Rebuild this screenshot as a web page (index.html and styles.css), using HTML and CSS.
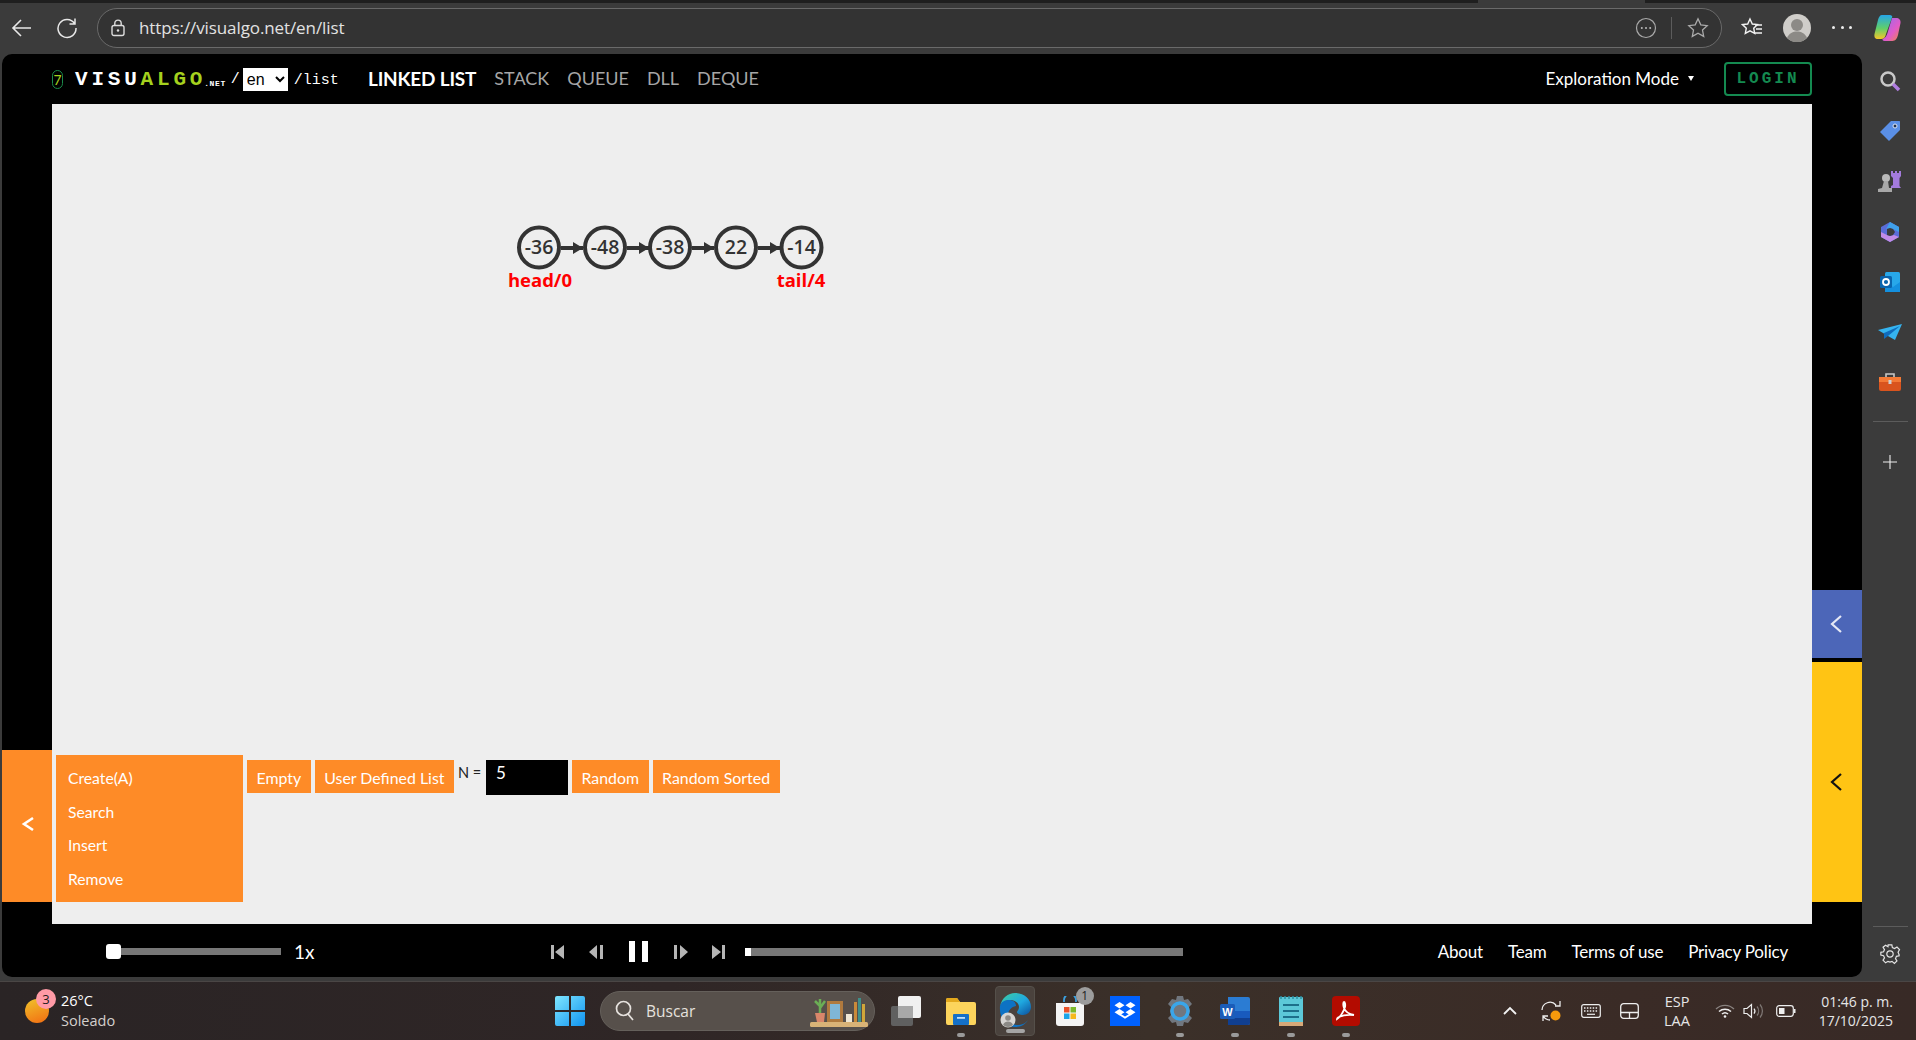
FILE: index.html
```html
<!DOCTYPE html>
<html lang="es">
<head>
    <meta charset="UTF-8">
    <title>VisuAlgo - Linked List</title>
    <link rel="stylesheet" href="styles.css">
</head>
<body>
    <div class="tabstrip"><div class="tab-active"></div></div>
    <div class="toolbar">
        <svg class="tool-icon back" width="22" height="22" viewBox="0 0 22 22"><path d="M20 11H2M10 3l-8 8 8 8" fill="none" stroke="#e8e8e8" stroke-width="1.6"/></svg>
        <svg class="tool-icon reload" width="22" height="22" viewBox="0 0 22 22"><path d="M18.5 6.5A9 9 0 1 0 20 11M19 1.5v5.5h-5.5" fill="none" stroke="#e8e8e8" stroke-width="1.5"/></svg>
        <div class="urlbar">
            <svg width="14" height="18" viewBox="0 0 14 18"><rect x="1" y="6.5" width="12" height="10" rx="2" fill="none" stroke="#ddd" stroke-width="1.4"/><path d="M3.8 6.5V4.3a3.2 3.2 0 0 1 6.4 0v2.2" fill="none" stroke="#ddd" stroke-width="1.4"/><circle cx="7" cy="11.5" r="1.2" fill="#ddd"/></svg>
            <span class="url">https://visualgo.net/en/list</span>
            <svg class="url-more" width="22" height="22" viewBox="0 0 22 22"><circle cx="11" cy="11" r="9.5" fill="none" stroke="#aaa" stroke-width="1.2"/><circle cx="6.8" cy="11" r="1" fill="#bbb"/><circle cx="11" cy="11" r="1" fill="#bbb"/><circle cx="15.2" cy="11" r="1" fill="#bbb"/></svg>
            <div class="url-sep"></div>
            <svg width="22" height="22" viewBox="0 0 22 22"><path d="M11 1.8l2.8 6 6.4.8-4.7 4.4 1.2 6.4-5.7-3.2-5.7 3.2 1.2-6.4L1.8 8.600l6.4-.8z" fill="none" stroke="#aaa" stroke-width="1.3"/></svg>
        </div>
        <svg class="fav" width="22" height="22" viewBox="0 0 22 22"><path d="M9 2l2.300 5 5.200.6-3.800 3.600 1 5.200L9 13.800l-4.700 2.600 1-5.200L1.500 7.600 6.700 7z" fill="none" stroke="#f2f2f2" stroke-width="1.400"/><path d="M14 8h7M15 12h6M14 16h7" stroke="#f2f2f2" stroke-width="1.300"/></svg>
        <svg class="profile" width="28" height="28" viewBox="0 0 28 28"><circle cx="14" cy="14" r="14" fill="#cfcdc9"/><circle cx="14" cy="11" r="6" fill="#8c8a86"/><path d="M4 24c2-5 6-6.500 10-6.500S22 19 24 24a14 14 0 0 1-20 0z" fill="#8c8a86"/></svg>
        <div class="more"><i></i><i></i><i></i></div>
        <svg class="copilot" width="28" height="28" viewBox="0 0 28 28">
            <defs>
                <linearGradient id="cp1" x1="0" y1="0" x2="0" y2="1"><stop offset="0" stop-color="#26a6e8"/><stop offset=".55" stop-color="#5fcf6a"/><stop offset="1" stop-color="#f5c52a"/></linearGradient>
                <linearGradient id="cp2" x1="0" y1="0" x2="1" y2="1"><stop offset="0" stop-color="#8f6df0"/><stop offset=".6" stop-color="#e25bc8"/><stop offset="1" stop-color="#f08a3c"/></linearGradient>
            </defs>
            <path d="M9 1h8c1 0 2 .8 2.300 1.800L13 20c-.5 3-2 5-5 5H5c-3 0-4-2-3.500-5L5 6c.7-3 2-5 4-5z" fill="url(#cp1)"/>
            <path d="M19 4h4c3 0 5 2 4.500 5L25 21c-.7 3-2.500 6-5.500 6h-8c-1.500 0-2-1-2-2 3-1 4-3 5-6z" fill="url(#cp2)"/>
        </svg>
    </div>

    <div class="window">
        <div class="page">
            <header class="topbar">
                <div class="logo-wrap">
                    <span class="pill">7</span>
                    <span class="logo">VISU<b>ALGO</b></span><span class="logo-net">.NET</span><span class="slash">/</span>
                    <select class="lang"><option>en</option></select>
                    <span class="path">/list</span>
                </div>
                <nav class="modes">
                    <a class="active">LINKED LIST</a>
                    <a>STACK</a>
                    <a>QUEUE</a>
                    <a>DLL</a>
                    <a>DEQUE</a>
                </nav>
                <div class="mode-pick">Exploration Mode<span class="caret"></span></div>
                <div class="login">LOGIN</div>
            </header>

            <div class="stage">
                <div class="col-left">
                    <div class="tab-orange"><svg width="14" height="16" viewBox="0 0 14 16"><path d="M12 2L3 8l9 6" fill="none" stroke="#fff" stroke-width="2.600"/></svg></div>
                </div>
                <main class="canvas">
                    <svg class="viz" width="1760" height="646" viewBox="0 0 1760 646">
                        <g class="edges">
                            <path d="M509 144h22M575 144h22M640 144h22M706 144h22"/>
                        </g>
                        <g class="arrows">
                            <path d="M521 138l10 6-10 6zM587 138l10 6-10 6zM652 138l10 6-10 6zM718 138l10 6-10 6z"/>
                        </g>
                        <g class="nodes">
                            <circle cx="487" cy="143.500" r="20"/><circle cx="553" cy="143.500" r="20"/><circle cx="618" cy="143.500" r="20"/><circle cx="684" cy="143.500" r="20"/><circle cx="749.500" cy="143.500" r="20"/>
                        </g>
                        <g class="node-text">
                            <text x="487" y="150">-36</text><text x="553" y="150">-48</text><text x="618" y="150">-38</text><text x="684" y="150">22</text><text x="749.500" y="150">-14</text>
                        </g>
                        <g class="node-label">
                            <text x="488" y="183">head/0</text><text x="749" y="183">tail/4</text>
                        </g>
                    </svg>
                    <div class="actions">
                        <ul class="action-list">
                            <li>Create(A)</li>
                            <li>Search</li>
                            <li>Insert</li>
                            <li>Remove</li>
                        </ul>
                        <div class="action-row">
                            <button class="act-btn">Empty</button>
                            <button class="act-btn">User Defined List</button>
                            <span class="n-label">N =</span>
                            <div class="n-input">5</div>
                            <button class="act-btn">Random</button>
                            <button class="act-btn">Random Sorted</button>
                        </div>
                    </div>
                </main>
                <div class="col-right">
                    <div class="tab-blue"><svg width="14" height="20" viewBox="0 0 14 20"><path d="M12 2L3 10l9 8" fill="none" stroke="#e6e9f5" stroke-width="2.200"/></svg></div>
                    <div class="tab-yellow"><svg width="14" height="20" viewBox="0 0 14 20"><path d="M12 2L3 10l9 8" fill="none" stroke="#111" stroke-width="2.200"/></svg></div>
                </div>
            </div>

            <footer class="player">
                <div class="speed"><div class="thumb"></div></div>
                <span class="speed-val">1x</span>
                <div class="media">
                    <svg width="13" height="16" viewBox="0 0 13 16"><path d="M0 1h3v14H0zM13 1v14L4 8z" fill="#b5b5b5"/></svg>
                    <svg class="m-b" width="16" height="16" viewBox="0 0 16 16"><path d="M9 1v14L1 8zM12 1h3v14h-3z" fill="#b5b5b5"/></svg>
                    <svg class="m-p" width="20" height="21" viewBox="0 0 20 21"><path d="M0 0h6v21H0zM13 0h6v21h-6z" fill="#fff"/></svg>
                    <svg class="m-f" width="16" height="16" viewBox="0 0 16 16"><path d="M1 1h3v14H1zM7 1l8 7-8 7z" fill="#b5b5b5"/></svg>
                    <svg class="m-l" width="14" height="16" viewBox="0 0 14 16"><path d="M0 1l9 7-9 7zM10 1h3v14h-3z" fill="#b5b5b5"/></svg>
                </div>
                <div class="progress"><div class="progress-done"></div></div>
                <div class="links">
                    <a>About</a><a>Team</a><a>Terms of use</a><a>Privacy Policy</a>
                </div>
            </footer>
        </div>

        <aside class="sidebar">
            <svg class="s1" width="22" height="22" viewBox="0 0 22 22"><circle cx="9" cy="9" r="6.500" fill="none" stroke="#c9c9c9" stroke-width="2.500"/><path d="M14 14l6 6" stroke="#b07de0" stroke-width="3.500"/></svg>
            <svg class="s2" width="22" height="22" viewBox="0 0 22 22"><path d="M12 1h8c.6 0 1 .4 1 1v8L10 21 1 12z" fill="#5a8fe6"/><circle cx="16" cy="6" r="2" fill="#23324f" stroke="#dfe8fa" stroke-width="1"/></svg>
            <svg class="s3" width="24" height="24" viewBox="0 0 24 24"><path d="M13 2h2v2h2V2h2v2h2V2h2v5l-1.500 2v8l1.500 2H13V17l2-1V9l-2-2z" fill="#a47bdc"/><circle cx="8" cy="9" r="4" fill="#b9b9b9"/><path d="M6 12h4l1 7h3v4H0v-3l4-1z" fill="#a8a8a8"/></svg>
            <svg class="s4" width="22" height="22" viewBox="0 0 22 22"><path d="M11 1l9 5v10l-9 5-9-5V6z" fill="#5a6cd8"/><path d="M11 1l9 5v5l-6-3-3-1-4 1z" fill="#3fa0ea"/><path d="M2 11l6 3 3 1 4-1 5 2-9 5-9-5z" fill="#c18be8"/><path d="M8 8l3-1 3 1 2 3-2 3-3 1-3-1z" fill="#3b3b3b"/></svg>
            <svg class="s5" width="22" height="22" viewBox="0 0 22 22"><rect x="6" y="1" width="15" height="20" rx="1.500" fill="#28a8ea"/><path d="M6 11l8 5 7-5v10H6z" fill="#1490df"/><rect x="1" y="5" width="12" height="12" rx="1.500" fill="#0a64ad"/><circle cx="7" cy="11" r="3" fill="none" stroke="#fff" stroke-width="1.800"/></svg>
            <svg class="s6" width="24" height="18" viewBox="0 0 24 18"><path d="M0 7L24 1 17 17l-7-4z" fill="#35b4f0"/><path d="M6 10v6l4-3 12-10z" fill="#0f6cbd"/></svg>
            <svg class="s7" width="24" height="20" viewBox="0 0 24 20"><path d="M8 5V2h8v3" fill="none" stroke="#c8c8c8" stroke-width="1.600"/><path d="M1 5h22v5H1z" fill="#f47a36"/><path d="M1 10h22v7a2 2 0 0 1-2 2H3a2 2 0 0 1-2-2z" fill="#d9541e"/><rect x="10.500" y="8" width="3" height="4" fill="#d0d0d0"/></svg>
            <div class="side-sep"></div>
            <svg class="s8" width="16" height="16" viewBox="0 0 16 16"><path d="M8 1v14M1 8h14" stroke="#eee" stroke-width="1.100"/></svg>
            <div class="side-sep bottom"></div>
            <svg class="s9" width="22" height="22" viewBox="0 0 24 24"><path d="M12 8.500a3.500 3.500 0 1 0 0 7 3.500 3.500 0 0 0 0-7zM10 2h4l.6 3 2.400 1 2.600-1.600 2.800 2.800L20.800 10l1 2.400-.1 0 .3 1.600-3 .6-1 2.400 1.600 2.600-2.800 2.800L14.200 20l-2.200.9-2.200-.9-2.600 1.600-2.800-2.800L6 16.200 5 13.800 2 13.200v-3l3-.6 1-2.400-1.600-2.600 2.800-2.200L9.800 4z" fill="none" stroke="#e4e4e4" stroke-width="1.300"/></svg>
        </aside>
    </div>

    <div class="taskbar">
        <div class="weather">
            <div class="sun"></div>
            <span class="badge">3</span>
            <div class="weather-text"><span>26°C</span><span class="dim">Soleado</span></div>
        </div>
        <div class="dock">
            <svg width="30" height="30" viewBox="0 0 30 30">
                <defs><linearGradient id="wn" x1="0" y1="0" x2="1" y2="1"><stop offset="0" stop-color="#7fe6ff"/><stop offset="1" stop-color="#0f93f0"/></linearGradient></defs>
                <path d="M0 2a2 2 0 0 1 2-2h12v14H0zM16 0h12a2 2 0 0 1 2 2v12H16zM0 16h14v14H2a2 2 0 0 1-2-2zM16 16h14v12a2 2 0 0 1-2 2H16z" fill="url(#wn)"/>
            </svg>
            <div class="searchbox">
                <svg width="20" height="22" viewBox="0 0 20 22"><circle cx="8.500" cy="8.500" r="7" fill="none" stroke="#e6e2de" stroke-width="1.700"/><path d="M13 14l5 6" stroke="#e6e2de" stroke-width="1.700"/></svg>
                <span>Buscar</span>
                <svg class="shelf" width="58" height="34" viewBox="0 0 58 34"><rect x="0" y="28" width="58" height="5" rx="1.500" fill="#d9b377"/><path d="M5 19h10l-1 9H7z" fill="#d9866a"/><path d="M10 19V5M10 12L5 7M10 14l5-7" stroke="#6bae55" stroke-width="2.500"/><rect x="17" y="7" width="16" height="21" fill="#b07a3e"/><rect x="20" y="10" width="10" height="15" fill="#7fb6d6"/><rect x="36" y="20" width="6" height="8" fill="#efe7d4"/><rect x="44" y="8" width="3" height="20" fill="#c98a3a"/><rect x="48" y="4" width="3" height="24" fill="#3f8f8a"/><rect x="52" y="10" width="3" height="18" fill="#d0a63a"/></svg>
            </div>
            <div class="dock-apps">
                <div class="app"><svg width="30" height="30" viewBox="0 0 30 30"><rect x="0" y="10" width="22" height="20" rx="2" fill="#606060"/><rect x="7" y="0" width="23" height="22" rx="2" fill="#f1f1f1"/><rect x="7" y="10" width="15" height="12" fill="#a8a8a8"/></svg></div>
                <div class="app running"><svg width="30" height="28" viewBox="0 0 30 28"><path d="M0 3a2 2 0 0 1 2-2h9l3 4h14a2 2 0 0 1 2 2v19a2 2 0 0 1-2 2H2a2 2 0 0 1-2-2z" fill="#fcd45c"/><path d="M0 3a2 2 0 0 1 2-2h9l3 4H0z" fill="#e3a81c"/><rect x="7" y="17" width="16" height="11" rx="1" fill="#1570c8"/><rect x="11" y="20" width="8" height="1.800" fill="#bfe0fa"/></svg></div>
                <div class="app current">
                    <svg width="32" height="36" viewBox="0 0 32 36">
                        <defs><linearGradient id="eg" x1="0" y1="0" x2="1" y2="1"><stop offset="0" stop-color="#3ecfa0"/><stop offset=".55" stop-color="#1fa8e0"/><stop offset="1" stop-color="#0c4f9c"/></linearGradient></defs>
                        <path d="M16 0c9 0 16 6 16 14 0 5-4 8-8 8-3 0-6-1-6-3 0-1 2-2 2-5 0-4-4-7-9-7-4 0-8 2-10 6C3 5 9 0 16 0z" fill="url(#eg)"/>
                        <path d="M1 13c1-4 5-6 9-6 4 0 7 2 7 6-5 1-9 5-8 12 .5 3 4 7 9 7 5 0 9-2 11-5-3 5-8 7-13 7C7 34 0 25 1 13z" fill="#0d72c4"/>
                        <circle cx="9" cy="27" r="7.500" fill="#d7d5d2"/><circle cx="9" cy="25" r="2.800" fill="#8c8a86"/><path d="M4 32c1-3 3-3.500 5-3.500s4 .5 5 3.500a7.500 7.500 0 0 1-10 0z" fill="#8c8a86"/>
                    </svg>
                </div>
                <div class="app store">
                    <svg width="30" height="30" viewBox="0 0 30 30"><path d="M9 6V4a6 6 0 0 1 12 0v2" fill="none" stroke="#3aa0e0" stroke-width="1.800"/><path d="M1 7h28v20a3 3 0 0 1-3 3H4a3 3 0 0 1-3-3z" fill="#f4f4f4"/><rect x="9" y="11" width="5.500" height="5.500" fill="#e8522a"/><rect x="15.500" y="11" width="5.500" height="5.500" fill="#7cb82a"/><rect x="9" y="17.500" width="5.500" height="5.500" fill="#1aa4e8"/><rect x="15.500" y="17.500" width="5.500" height="5.500" fill="#f6b81c"/></svg>
                    <span class="store-badge">1</span>
                </div>
                <div class="app"><svg width="30" height="30" viewBox="0 0 30 30"><rect width="30" height="30" fill="#0061fe"/><path d="M9.500 6l5 3.200-5 3.200-5-3.200zM20.500 6l5 3.200-5 3.200-5-3.200zM9.500 13l5 3.200-5 3.200-5-3.200zM20.500 13l5 3.200-5 3.200-5-3.200zM15 20.500l5-3 .5 .3v1.500l-5.500 3.500-5.500-3.500v-1.500l.5-.3z" fill="#fff"/></svg></div>
                <div class="app running"><svg width="30" height="30" viewBox="0 0 30 30"><path d="M12 0h6l1 4 4-1 4 5-3 3 1 4-1 4 3 3-4 5-4-1-1 4h-6l-1-4-4 1-4-5 3-3-1-4 1-4-3-3 4-5 4 1z" fill="#71777f"/><circle cx="15" cy="15" r="8" fill="none" stroke="#3aa6ea" stroke-width="3.500"/></svg></div>
                <div class="app running"><svg width="30" height="30" viewBox="0 0 30 30"><path d="M8 1h20a2 2 0 0 1 2 2v24a2 2 0 0 1-2 2H8z" fill="#2b7cd3"/><path d="M8 15h22v7H8z" fill="#185abd"/><path d="M8 22h22v5a2 2 0 0 1-2 2H8z" fill="#103f91"/><rect x="0" y="8" width="15" height="15" rx="1.500" fill="#1a5cb8"/><text class="word-w" x="7.500" y="20">W</text></svg></div>
                <div class="app running"><svg width="24" height="30" viewBox="0 0 24 30"><rect x="0" y="1" width="24" height="26" rx="1" fill="#5cc8d8"/><rect x="0" y="26" width="24" height="4" fill="#d6a878"/><path d="M2 0v3M6 0v3M10 0v3M14 0v3M18 0v3M22 0v3" stroke="#2b8ea0" stroke-width="1.500"/><path d="M4 9h16M4 15h16M4 21h16" stroke="#1d6f8a" stroke-width="2.200"/></svg></div>
                <div class="app running"><svg width="28" height="30" viewBox="0 0 28 30"><rect width="28" height="30" rx="4" fill="#b30b00"/><path d="M5 23c3-2 6-6 8-12 .5-2 0-5-1-5s-1 3 0 6c1.500 4 4 6 10 7-5-.5-11 0-15 2-1 .5-2 1.500-2 2z" fill="none" stroke="#fff" stroke-width="1.800"/></svg></div>
            </div>
        </div>
        <div class="tray">
            <svg class="t-chev" width="14" height="10" viewBox="0 0 14 10"><path d="M1 8l6-6 6 6" fill="none" stroke="#f2f2f2" stroke-width="1.800"/></svg>
            <svg class="t-sync" width="22" height="22" viewBox="0 0 22 22"><path d="M2 10a8 8 0 0 1 14-5M20 1v5h-5M3 21v-5h5M3 16c2 3 4 4 7 4" fill="none" stroke="#eee" stroke-width="1.300"/><circle cx="15.500" cy="15.500" r="5" fill="#f59a0c"/></svg>
            <svg class="t-key" width="20" height="14" viewBox="0 0 20 14"><rect x=".7" y=".7" width="18.600" height="12.600" rx="2" fill="none" stroke="#eee" stroke-width="1.200"/><path d="M3 4h14M3 7h14" stroke="#eee" stroke-width="1.300" stroke-dasharray="1.500 1.400"/><path d="M6 10.300h8" stroke="#eee" stroke-width="1.200"/></svg>
            <svg class="t-tab" width="19" height="16" viewBox="0 0 19 16"><rect x=".7" y=".7" width="17.600" height="14.600" rx="3" fill="none" stroke="#eee" stroke-width="1.300"/><path d="M1 9.500h17M9.500 9.500V15" stroke="#eee" stroke-width="1.300"/></svg>
            <div class="t-lang"><span>ESP</span><span>LAA</span></div>
            <svg class="t-wifi" width="20" height="14" viewBox="0 0 20 14"><path d="M1 5a13 13 0 0 1 18 0" fill="none" stroke="#8a8380" stroke-width="1.300"/><path d="M4 7.500a9 9 0 0 1 12 0M7 10a4.500 4.500 0 0 1 6 0" fill="none" stroke="#eee" stroke-width="1.500"/><circle cx="10" cy="12.500" r="1.300" fill="#eee"/></svg>
            <svg class="t-vol" width="20" height="16" viewBox="0 0 20 16"><path d="M1 5.500h3L8.500 1.500v13L4 10.500H1z" fill="none" stroke="#eee" stroke-width="1.200"/><path d="M11 5.500a4 4 0 0 1 0 5" fill="none" stroke="#eee" stroke-width="1.200"/><path d="M14 3.500a7 7 0 0 1 0 9M17 1.500a10 10 0 0 1 0 13" fill="none" stroke="#7f7875" stroke-width="1.200"/></svg>
            <svg class="t-bat" width="20" height="12" viewBox="0 0 20 12"><rect x=".7" y=".7" width="16.600" height="10.600" rx="2.500" fill="none" stroke="#eee" stroke-width="1.200"/><rect x="3" y="3" width="5.500" height="6" fill="#eee"/><rect x="18" y="4" width="1.500" height="4" fill="#eee"/></svg>
            <div class="t-clock"><span>01:46 p. m.</span><span>17/10/2025</span></div>
        </div>
    </div>
</body>
</html>
```

FILE: styles.css
```css
* {
    box-sizing: border-box;
}
html, body {
    margin: 0;
    height: 1040px;
    overflow: hidden;
}
body {
    display: flex;
    flex-direction: column;
    width: 1916px;
    background-color: #3b3b3b;
    font-family: Lato, "Open Sans", sans-serif;
    color: #fff;
}

/* browser chrome */
.tabstrip {
    height: 3px;
    background-color: #1f1f1f;
    display: flex;
    padding-left: 1478px;
}
.tab-active {
    width: 167px;
    background-color: #3b3b3b;
}
.toolbar {
    height: 51px;
    display: flex;
    align-items: center;
    padding-left: 11px;
    padding-bottom: 2px;
}
.reload {
    margin-left: 23px;
}
.urlbar {
    margin-left: 19px;
    width: 1625px;
    height: 40px;
    border: 1px solid #6a6a6a;
    border-radius: 20px;
    background-color: #333;
    display: flex;
    align-items: center;
    padding: 0 12px 0 13px;
}
.url {
    margin-left: 14px;
    font-family: "Open Sans", sans-serif;
    font-size: 17px;
    letter-spacing: -.1px;
    color: #e2e2e2;
    flex: 1;
}
.url-sep {
    width: 1px;
    height: 22px;
    background-color: #5c5c5c;
    margin: 0 15px 0 14px;
}
.fav {
    margin-left: 19px;
}
.profile {
    margin-left: 20px;
}
.more {
    margin-left: 21px;
    width: 20px;
    display: flex;
    justify-content: space-between;
}
.more i {
    width: 3px;
    height: 3px;
    border-radius: 50%;
    background-color: #eee;
}
.copilot {
    margin-left: 21px;
}

.window {
    height: 927px;
    display: flex;
    padding-left: 2px;
}
.page {
    width: 1860px;
    height: 923px;
    background-color: #000;
    border-radius: 10px;
    display: flex;
    flex-direction: column;
}

/* visualgo header */
.topbar {
    height: 50px;
    display: flex;
    align-items: center;
    padding-left: 50px;
    padding-right: 50px;
}
.logo-wrap {
    display: flex;
    align-items: center;
    width: 316px;
}
.pill {
    width: 11px;
    height: 19px;
    border: 1px solid #1b8a4a;
    border-radius: 6px;
    color: #a5d11e;
    font-size: 14px;
    line-height: 17px;
    text-align: center;
}
.logo {
    margin-left: 12px;
    font-family: "Liberation Mono", monospace;
    font-weight: bold;
    font-size: 21px;
    letter-spacing: 3.800px;
    color: #fff;
}
.logo b {
    color: #a5d11e;
}
.logo-net {
    font-family: "Liberation Mono", monospace;
    font-weight: bold;
    font-size: 8px;
    letter-spacing: .6px;
    margin-left: -2px;
    padding-top: 8px;
}
.slash {
    margin-left: 5px;
    font-family: "Liberation Mono", monospace;
    font-size: 15px;
}
.lang {
    margin-left: 3px;
    width: 45px;
    height: 23px;
    border: none;
    border-radius: 0;
    background-color: #fff;
    color: #000;
    font-family: "Liberation Sans", sans-serif;
    font-size: 16px;
}
.path {
    margin-left: 6px;
    padding-top: 3px;
    font-family: "Liberation Mono", monospace;
    font-size: 15px;
}
.modes {
    display: flex;
    align-items: center;
    gap: 18px;
    font-size: 18px;
    color: #a6a6a6;
    flex: 1;
    padding-bottom: 2px;
}
.modes .active {
    color: #fff;
    font-weight: bold;
    font-size: 19px;
    letter-spacing: -.2px;
}
.mode-pick {
    font-size: 17px;
    display: flex;
    align-items: center;
    padding-bottom: 2px;
}
.caret {
    margin-left: 9px;
    border-left: 3.500px solid transparent;
    border-right: 3.500px solid transparent;
    border-top: 5px solid #fff;
}
.login {
    margin-left: 30px;
    width: 88px;
    height: 34px;
    border: 2px solid #148a50;
    border-radius: 4px;
    color: #148a50;
    font-family: "Liberation Mono", monospace;
    font-weight: bold;
    font-size: 16px;
    letter-spacing: 3px;
    line-height: 30px;
    text-align: center;
}

/* main area */
.stage {
    height: 820px;
    display: flex;
}
.col-left {
    width: 50px;
    display: flex;
    flex-direction: column;
    justify-content: flex-end;
    padding-bottom: 22px;
}
.tab-orange {
    height: 152px;
    padding: 0 0 4px 2px;
    background-color: #fe8b27;
    display: flex;
    align-items: center;
    justify-content: center;
}
.canvas {
    width: 1760px;
    background-color: #eee;
    display: flex;
    flex-direction: column;
}
.viz {
    flex: none;
    display: block;
}
.edges path {
    stroke: #333;
    stroke-width: 4;
    fill: none;
}
.arrows path {
    fill: #333;
}
.nodes circle {
    fill: #eee;
    stroke: #333;
    stroke-width: 4;
}
.node-text text {
    font-family: "Open Sans", sans-serif;
    font-size: 19.500px;
    font-weight: 600;
    fill: #333;
    text-anchor: middle;
}
.node-label text {
    font-family: "Open Sans", sans-serif;
    font-size: 18.500px;
    font-weight: 700;
    fill: #f00;
    text-anchor: middle;
}
.actions {
    display: flex;
    padding-left: 4px;
    margin-top: 5px;
}
.action-list {
    list-style: none;
    margin: 0;
    padding: 10px 0 0 12px;
    width: 187px;
    height: 147px;
    background-color: #fe8b27;
    font-size: 15.700px;
}
.action-list li {
    height: 33.700px;
    line-height: 26px;
}
.action-row {
    display: flex;
    align-items: flex-start;
    margin-left: 4px;
    margin-top: 5px;
}
.act-btn {
    height: 33px;
    margin-right: 4px;
    padding: 1px 9.500px 0;
    border: none;
    background-color: #fe8b27;
    color: #fff;
    font-family: Lato, sans-serif;
    font-size: 15.900px;
}
.n-label {
    font-size: 14.500px;
    color: #222;
    width: 28px;
    line-height: 26px;
}
.n-input {
    width: 82px;
    height: 35px;
    margin-right: 4px;
    padding-left: 10px;
    background-color: #000;
    font-size: 17px;
    line-height: 26px;
}
.col-right {
    width: 50px;
    display: flex;
    flex-direction: column;
    padding-top: 486px;
}
.tab-blue {
    height: 68px;
    padding-right: 2px;
    background-color: #4c66b8;
    display: flex;
    align-items: center;
    justify-content: center;
}
.tab-yellow {
    height: 240px;
    padding-right: 2px;
    margin-top: 4px;
    background-color: #ffc414;
    display: flex;
    align-items: center;
    justify-content: center;
}

/* playback bar */
.player {
    height: 53px;
    display: flex;
    align-items: center;
    padding-left: 104px;
    padding-top: 2px;
}
.speed {
    width: 175px;
    height: 7px;
    background-color: #777;
    display: flex;
    align-items: center;
}
.thumb {
    width: 15px;
    height: 15px;
    border-radius: 3px;
    background-color: #fff;
}
.speed-val {
    margin-left: 13px;
    font-size: 19px;
    width: 257px;
}
.media {
    display: flex;
    align-items: center;
    width: 194px;
}
.m-b {
    margin-left: 24px;
}
.m-p {
    margin-left: 25px;
}
.m-f {
    margin-left: 24px;
}
.m-l {
    margin-left: 23px;
}
.progress {
    width: 438px;
    height: 8px;
    background-color: #777;
}
.progress-done {
    width: 6px;
    height: 8px;
    background-color: #fff;
}
.links {
    margin-left: auto;
    margin-right: 74px;
    display: flex;
    gap: 25px;
    font-size: 17px;
    letter-spacing: -.2px;
}

/* edge sidebar */
.sidebar {
    width: 54px;
    height: 923px;
    padding-left: 2px;
    display: flex;
    flex-direction: column;
    align-items: center;
}
.s1 {
    margin-top: 16px;
}
.s2 {
    margin-top: 28px;
}
.s3 {
    margin-top: 27px;
}
.s4 {
    margin-top: 28px;
}
.s5 {
    margin-top: 28px;
}
.s6 {
    margin-top: 30px;
}
.s7 {
    margin-top: 31px;
}
.side-sep {
    width: 35px;
    height: 1px;
    background-color: #5c5c5c;
    margin-top: 29px;
}
.s8 {
    margin-top: 32px;
}
.side-sep.bottom {
    margin-top: auto;
}
.s9 {
    margin-top: 16px;
    margin-bottom: 12px;
}

/* windows taskbar */
.taskbar {
    height: 59px;
    border-top: 1px solid #4a4645;
    background: linear-gradient(90deg, #2a2425 0%, #2f2626 35%, #3b3029 60%, #3a2b26 85%, #382a26 100%);
    display: flex;
    align-items: center;
    position: relative;
    font-family: "Open Sans", sans-serif;
}
.weather {
    width: 545px;
    padding-left: 25px;
    display: flex;
    align-items: center;
}
.sun {
    width: 24px;
    height: 24px;
    border-radius: 50%;
    background: linear-gradient(160deg, #f0c22a, #f26c12);
}
.badge {
    position: absolute;
    left: 36px;
    top: 7px;
    width: 20px;
    height: 20px;
    border-radius: 50%;
    background-color: #ff9aa6;
    color: #1c1c1c;
    font-size: 13px;
    line-height: 20px;
    text-align: center;
}
.weather-text {
    margin-left: 12px;
    display: flex;
    flex-direction: column;
    font-size: 14.500px;
    line-height: 20px;
}
.dim {
    color: #d4d0cd;
}
.dock {
    width: 860px;
    margin-left: 10px;
    display: flex;
    align-items: center;
}
.searchbox {
    margin-left: 15px;
    width: 275px;
    height: 40px;
    border-radius: 20px;
    background-color: #57504b;
    border: 1px solid #65605b;
    display: flex;
    align-items: center;
    padding: 0 6px 0 14px;
    font-size: 15.500px;
    color: #e6e2de;
}
.searchbox span {
    margin-left: 11px;
    flex: 1;
}
.dock-apps {
    margin-left: 16px;
    display: flex;
    align-items: center;
}
.app {
    width: 30px;
    height: 50px;
    margin-right: 25.300px;
    display: flex;
    align-items: center;
    justify-content: center;
    position: relative;
}
.app.running::after {
    content: "";
    position: absolute;
    left: 11px;
    bottom: -1px;
    width: 8px;
    height: 4px;
    border-radius: 2px;
    background-color: #9a9a9a;
}
.app.current {
    width: 40px;
    margin-left: -7px;
    margin-right: 20px;
    background-color: #4a423d;
    border: 1px solid #55504a;
    border-radius: 4px;
}
.app.current::after {
    content: "";
    position: absolute;
    left: 10px;
    bottom: 2px;
    width: 19px;
    height: 4px;
    border-radius: 2px;
    background-color: #a5a5a5;
}
.store-badge {
    position: absolute;
    right: -9px;
    top: 1px;
    width: 18px;
    height: 18px;
    border-radius: 50%;
    background-color: #9c9c9c;
    color: #222;
    font-size: 12px;
    line-height: 18px;
    text-align: center;
}
.word-w {
    font-family: "Liberation Sans", sans-serif;
    font-size: 11px;
    font-weight: bold;
    fill: #fff;
    text-anchor: middle;
}
.tray {
    flex: 1;
    display: flex;
    align-items: center;
    padding-left: 88px;
}
.t-sync {
    margin-left: 23px;
}
.t-key {
    margin-left: 19px;
}
.t-tab {
    margin-left: 19px;
}
.t-lang {
    margin-left: 13px;
    width: 50px;
    display: flex;
    flex-direction: column;
    align-items: center;
    font-size: 14.500px;
    line-height: 19px;
    color: #e6e6e6;
}
.t-wifi {
    margin-left: 13px;
}
.t-vol {
    margin-left: 8px;
}
.t-bat {
    margin-left: 13px;
}
.t-clock {
    margin-left: auto;
    margin-right: 23px;
    display: flex;
    flex-direction: column;
    align-items: flex-end;
    font-size: 14px;
    line-height: 19px;
    color: #e6e6e6;
}
```
